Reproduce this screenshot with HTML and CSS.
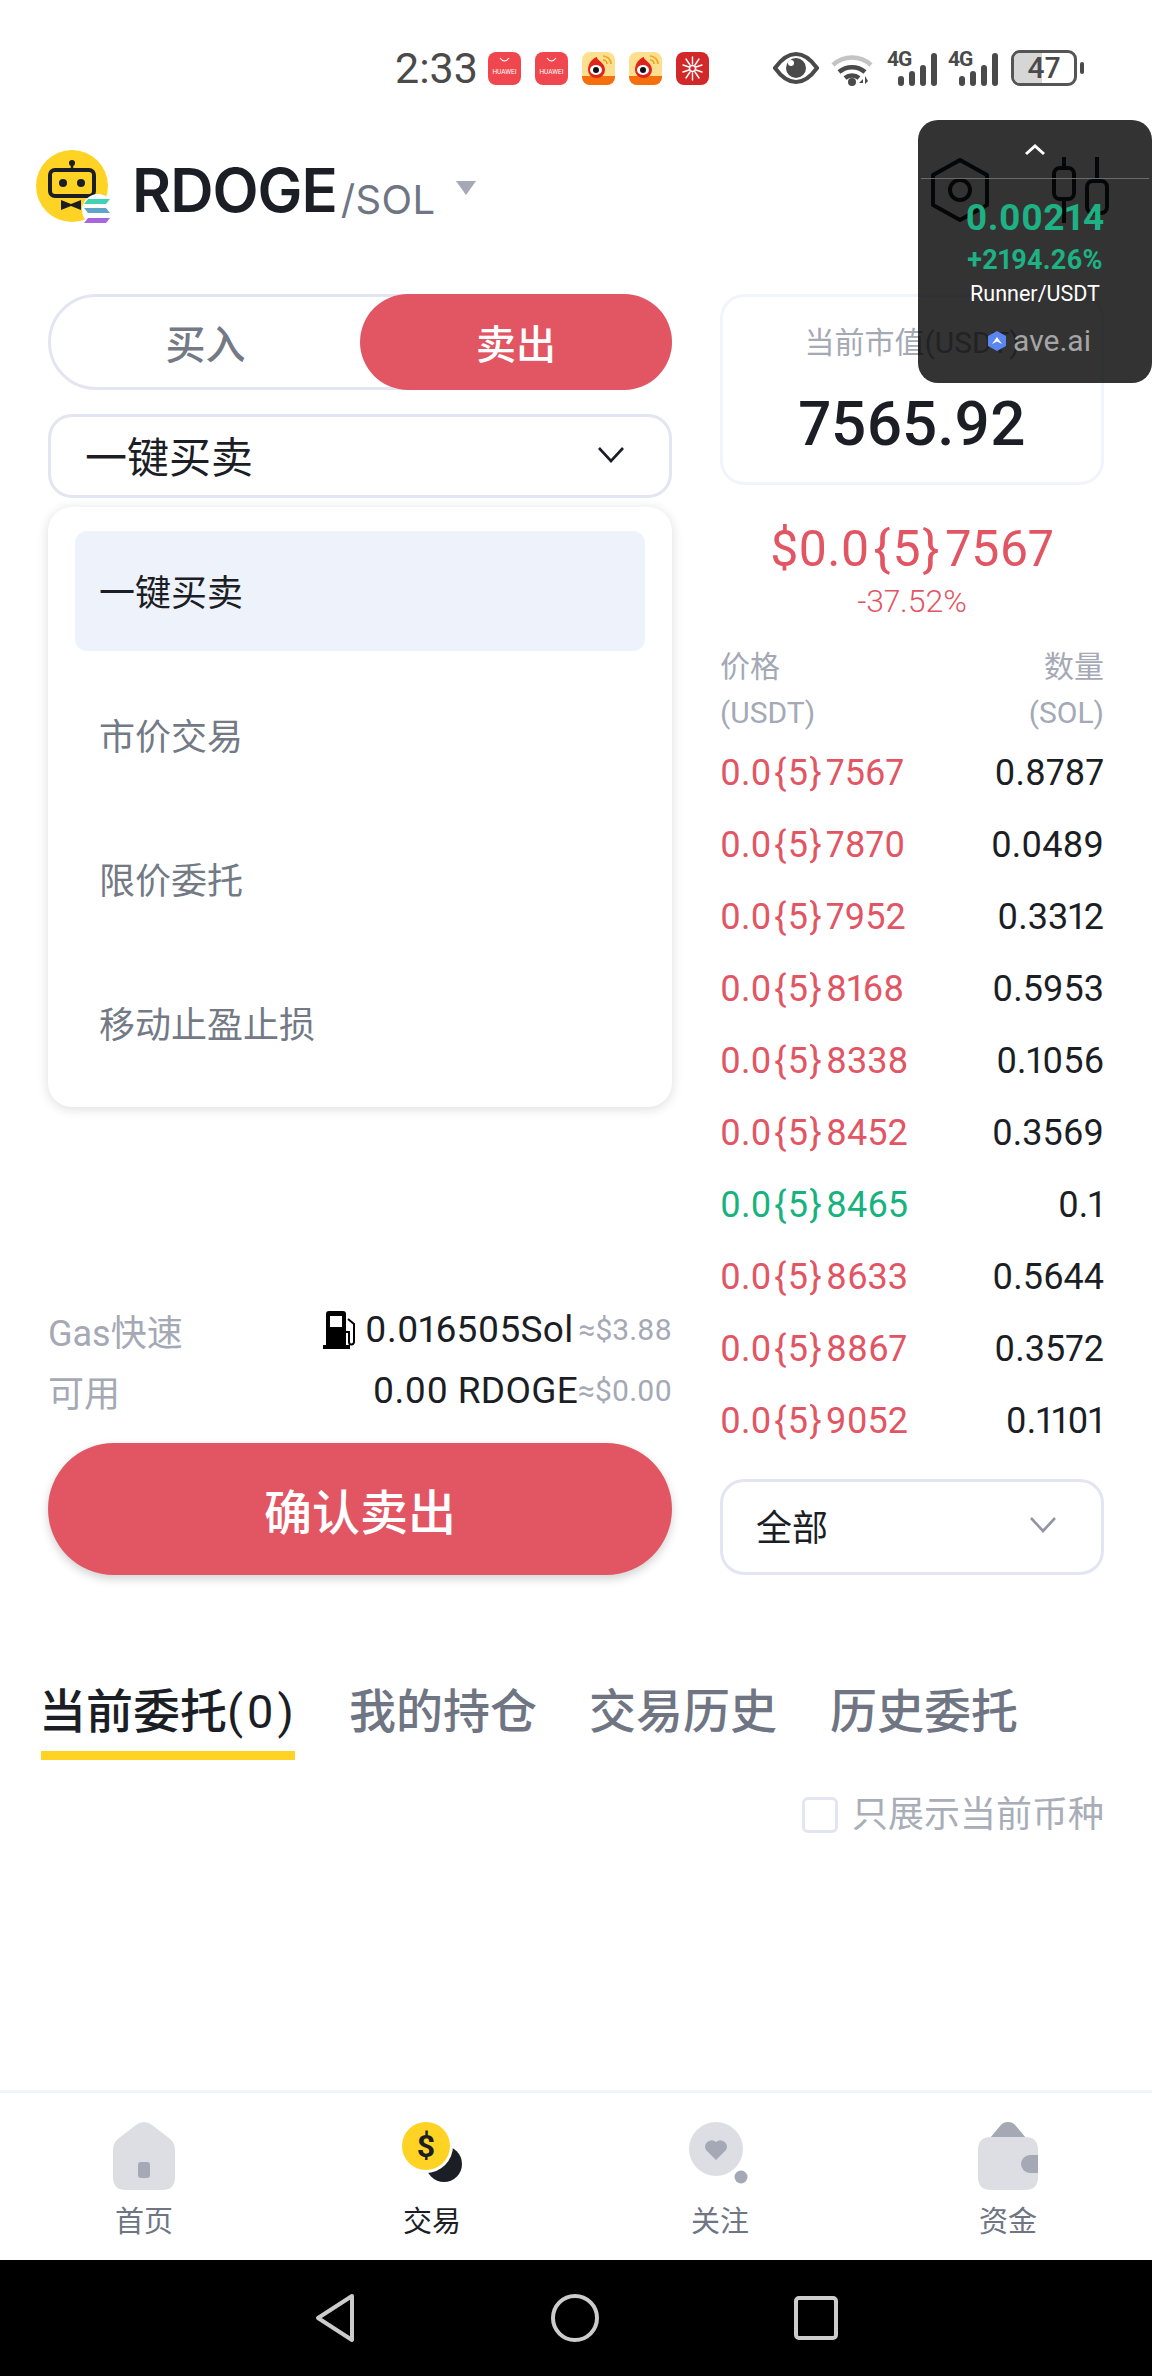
FILE: index.html
```html
<!DOCTYPE html>
<html lang="zh">
<head>
    <meta charset="utf-8">
    <link rel="stylesheet" href="styles.css">
    <title>RDOGE/SOL</title>
</head>
<body>
<div class="phone">
    <div class="status-bar">
        <span class="status-time">2:33</span>
        <div class="status-apps">
            <svg class="app-icon" viewBox="0 0 33 33"><rect width="33" height="33" rx="8" fill="#f0474f"/><path d="M12 6q4.500 6 9 0" fill="none" stroke="#fff" stroke-width="1.200"/><text x="16.500" y="22" class="app-label">HUAWEI</text></svg>
            <svg class="app-icon" viewBox="0 0 33 33"><rect width="33" height="33" rx="8" fill="#f0474f"/><path d="M12 6q4.500 6 9 0" fill="none" stroke="#fff" stroke-width="1.200"/><text x="16.500" y="22" class="app-label">HUAWEI</text></svg>
            <svg class="app-icon" viewBox="0 0 33 33"><rect width="33" height="33" rx="8" fill="#fde08f"/><path d="M0 24h33v1a8 8 0 0 1-8 8H8a8 8 0 0 1-8-8z" fill="#f4700f"/><path d="M6 18c0-7 5-12 9-13-1 3 8 5 8 13a8.500 8 0 0 1-17 0z" fill="#e0241c"/><ellipse cx="14" cy="18" rx="6" ry="5" fill="#fff"/><circle cx="14" cy="18" r="3" fill="#111"/><path d="M21 4a8 8 0 0 1 8 8M21 8a4 4 0 0 1 4 4" fill="none" stroke="#f1a21e" stroke-width="1.600"/></svg>
            <svg class="app-icon" viewBox="0 0 33 33"><rect width="33" height="33" rx="8" fill="#fde08f"/><path d="M0 24h33v1a8 8 0 0 1-8 8H8a8 8 0 0 1-8-8z" fill="#f4700f"/><path d="M6 18c0-7 5-12 9-13-1 3 8 5 8 13a8.500 8 0 0 1-17 0z" fill="#e0241c"/><ellipse cx="14" cy="18" rx="6" ry="5" fill="#fff"/><circle cx="14" cy="18" r="3" fill="#111"/><path d="M21 4a8 8 0 0 1 8 8M21 8a4 4 0 0 1 4 4" fill="none" stroke="#f1a21e" stroke-width="1.600"/></svg>
            <svg class="app-icon" viewBox="0 0 33 33"><rect width="33" height="33" rx="8" fill="#d3282a"/><g fill="none" stroke="#fff" stroke-width="1.400" stroke-linecap="round"><circle cx="16.500" cy="16.500" r="3"/><path d="M16.500 5v7M16.500 21v7M7 13l6 2M20 18l6 2M26 13l-6 2M13 18l-6 2M10 7l4 6M19 20l4 6M23 7l-4 6M14 20l-4 6"/></g></svg>
        </div>
        <div class="status-system">
            <svg class="eye-icon" viewBox="0 0 46 32"><path d="M2 16Q12 2 23 2t21 14Q34 30 23 30T2 16z" fill="none" stroke="#4a4a4a" stroke-width="4"/><circle cx="23" cy="16" r="10" fill="#4a4a4a"/><circle cx="18" cy="11" r="3" fill="#fff"/></svg>
            <svg class="wifi-icon" viewBox="0 0 46 35"><path d="M3 14a28 28 0 0 1 38 0" fill="none" stroke="#c4c4c4" stroke-width="4.500"/><path d="M9 21a20 20 0 0 1 26 0M15 27a11 11 0 0 1 14 0" fill="none" stroke="#4a4a4a" stroke-width="4.500"/><circle cx="22" cy="31" r="4" fill="#4a4a4a"/><path d="M33 28l-4 4h4zM35 25v8l3-3z" fill="#4a4a4a"/></svg>
            <div class="signal">
                <span class="signal-tag">4G</span>
                <span class="signal-bar bar-1"></span><span class="signal-bar bar-2"></span><span class="signal-bar bar-3"></span><span class="signal-bar bar-4"></span>
            </div>
            <div class="signal">
                <span class="signal-tag">4G</span>
                <span class="signal-bar bar-1"></span><span class="signal-bar bar-2"></span><span class="signal-bar bar-3"></span><span class="signal-bar bar-4"></span>
            </div>
            <div class="battery">
                <div class="battery-body"><span class="battery-fill"></span><span class="battery-level">47</span></div>
                <span class="battery-nub"></span>
            </div>
        </div>
    </div>

    <div class="float-ticker">
        <svg class="float-chevron" viewBox="0 0 22 12"><path d="M2 10l9-8 9 8" fill="none" stroke="#fff" stroke-width="3"/></svg>
        <div class="float-line"></div>
        <div class="float-price">0.00214</div>
        <div class="float-change">+2194.26%</div>
        <div class="float-pair">Runner/USDT</div>
        <div class="float-brand">
            <svg class="brand-icon" viewBox="0 0 20 20"><path d="M10 0l9 5v10l-9 5-9-5V5z" fill="#5b86f0"/><path d="M5 13l5-7 5 7-5-2.500z" fill="#fff"/></svg>
            <span>ave.ai</span>
        </div>
    </div>

    <header class="pair-header">
        <div class="pair-logo">
            <svg viewBox="0 0 78 76" width="78" height="76">
                <circle cx="36" cy="36" r="36" fill="#ffd324"/>
                <circle cx="36" cy="13" r="3" fill="#1b1e25"/>
                <path d="M36 14v7" stroke="#1b1e25" stroke-width="2.500"/>
                <rect x="14" y="20" width="44" height="26" rx="5" fill="#ffd324" stroke="#1b1e25" stroke-width="4"/>
                <circle cx="27" cy="33" r="4" fill="#1b1e25"/>
                <circle cx="45" cy="33" r="4" fill="#1b1e25"/>
                <path d="M25 50l10 4 10-4v10l-10-4-10 4z" fill="#1b1e25"/>
                <circle cx="62" cy="60" r="16" fill="#fff"/>
                <path d="M52 49h22l-4 5H48z" fill="#3fd3b5"/>
                <path d="M48 58h22l4 5H52z" fill="#5ea5c9"/>
                <path d="M52 68h22l-4 5H48z" fill="#a866dd"/>
            </svg>
        </div>
        <span class="pair-base">RDOGE</span>
        <span class="pair-quote">/SOL</span>
        <span class="pair-caret"></span>
        <div class="pair-tools">
            <svg class="tool-hex" viewBox="0 0 60 66"><path d="M30 3l27 15v30L30 63 3 48V18z" fill="none" stroke="#1b1e25" stroke-width="4" stroke-linejoin="round"/><circle cx="30" cy="33" r="10" fill="none" stroke="#1b1e25" stroke-width="4"/></svg>
            <svg class="tool-candle" viewBox="0 0 60 66"><path d="M14 0v66M47 0v24M47 56v6" fill="none" stroke="#1b1e25" stroke-width="4"/><rect x="4" y="11" width="20" height="31" rx="6" fill="#fff" stroke="#1b1e25" stroke-width="4"/><rect x="37" y="24" width="20" height="32" rx="6" fill="#fff" stroke="#1b1e25" stroke-width="4"/></svg>
        </div>
    </header>

    <main class="trade-grid">
        <section class="trade-form">
            <div class="side-toggle">
                <span class="side-option">买入</span>
                <span class="side-option side-active">卖出</span>
            </div>
            <div class="select select-order">
                <span>一键买卖</span>
                <svg class="select-arrow" viewBox="0 0 28 18"><path d="M2 2l12 13L26 2" fill="none" stroke="#1b1e25" stroke-width="2.600"/></svg>
            </div>
            <ul class="order-menu">
                <li class="menu-item menu-active">一键买卖</li>
                <li class="menu-item">市价交易</li>
                <li class="menu-item">限价委托</li>
                <li class="menu-item">移动止盈止损</li>
            </ul>
            <div class="form-bottom">
                <div class="info-row">
                    <span class="info-label">Gas快速</span>
                    <span class="info-value">
                        <svg class="pump-icon" viewBox="0 0 36 38"><path d="M3 3a3 3 0 0 1 3-3h14a3 3 0 0 1 3 3v32H3z" fill="#000"/><rect x="7" y="5" width="12" height="11" fill="#fff"/><rect y="34" width="27" height="4" fill="#000"/><path d="M25 8l6 5v18a2.500 2.500 0 0 1-5 0V21h-3" fill="none" stroke="#000" stroke-width="2"/></svg>
                        <span>0.016505Sol</span><span class="info-approx info-approx-small">≈$3.88</span>
                    </span>
                </div>
                <div class="info-row">
                    <span class="info-label">可用</span>
                    <span class="info-value"><span>0.00 RDOGE</span><span class="info-approx">≈$0.00</span></span>
                </div>
                <div class="confirm-button">确认卖出</div>
            </div>
        </section>

        <section class="book">
            <div class="cap-card">
                <div class="cap-label">当前市值(USDT)</div>
                <div class="cap-value">7565.92</div>
            </div>
            <div class="last-price">$0.0<span class="zeros">{5}</span>7567</div>
            <div class="last-change">-37.52%</div>
            <div class="book-head">
                <div>价格<br>(USDT)</div>
                <div class="book-head-right">数量<br>(SOL)</div>
            </div>
            <div class="book-row"><span class="down">0.0<span class="zeros">{5}</span>7567</span><span>0.8787</span></div>
            <div class="book-row"><span class="down">0.0<span class="zeros">{5}</span>7870</span><span>0.0489</span></div>
            <div class="book-row"><span class="down">0.0<span class="zeros">{5}</span>7952</span><span>0.3312</span></div>
            <div class="book-row"><span class="down">0.0<span class="zeros">{5}</span>8168</span><span>0.5953</span></div>
            <div class="book-row"><span class="down">0.0<span class="zeros">{5}</span>8338</span><span>0.1056</span></div>
            <div class="book-row"><span class="down">0.0<span class="zeros">{5}</span>8452</span><span>0.3569</span></div>
            <div class="book-row"><span class="up">0.0<span class="zeros">{5}</span>8465</span><span>0.1</span></div>
            <div class="book-row"><span class="down">0.0<span class="zeros">{5}</span>8633</span><span>0.5644</span></div>
            <div class="book-row"><span class="down">0.0<span class="zeros">{5}</span>8867</span><span>0.3572</span></div>
            <div class="book-row"><span class="down">0.0<span class="zeros">{5}</span>9052</span><span>0.1101</span></div>
            <div class="select select-depth">
                <span>全部</span>
                <svg class="select-arrow" viewBox="0 0 28 18"><path d="M2 2l12 13L26 2" fill="none" stroke="#8f95a3" stroke-width="2.600"/></svg>
            </div>
        </section>
    </main>

    <nav class="tabs">
        <span class="tab tab-active">当前委托<span class="tab-count">(0)</span></span>
        <span class="tab tab-hold">我的持仓</span>
        <span class="tab">交易历史</span>
        <span class="tab tab-last">历史委托</span>
    </nav>
    <div class="filter-row">
        <span class="checkbox"></span>
        <span>只展示当前币种</span>
    </div>

    <footer class="bottom-nav">
        <div class="nav-item">
            <svg class="nav-icon" viewBox="0 0 68 68"><path d="M34 0q4 0 8 3l17 13q6 5 6 11v28q0 13-13 13H16Q3 68 3 55V27q0-6 6-11L26 3q4-3 8-3z" fill="#dcdee3"/><rect x="28" y="40" width="12" height="16" rx="3" fill="#a4a9b5"/></svg>
            <span>首页</span>
        </div>
        <div class="nav-item nav-active">
            <svg class="nav-icon" viewBox="0 0 68 68"><circle cx="46" cy="42" r="18" fill="#1b1e25"/><circle cx="28" cy="24" r="27" fill="#fff"/><circle cx="28" cy="24" r="24" fill="#ffd324"/><text x="28" y="35" class="coin-mark">$</text></svg>
            <span>交易</span>
        </div>
        <div class="nav-item">
            <svg class="nav-icon" viewBox="0 0 68 68"><circle cx="30" cy="27" r="27" fill="#dcdee3"/><path d="M30 38L20 28a6.500 6.500 0 0 1 10-8 6.500 6.500 0 0 1 10 8z" fill="#a4a9b5"/><circle cx="55" cy="55" r="6.500" fill="#a4a9b5"/></svg>
            <span>关注</span>
        </div>
        <div class="nav-item">
            <svg class="nav-icon" viewBox="0 0 68 68"><path d="M34 0q5 0 8 4l10 12H16L26 4q3-4 8-4z" fill="#a4a9b5"/><path d="M17 15h34q13 0 13 13v27q0 13-13 13H17Q4 68 4 55V28q0-13 13-13z" fill="#dcdee3"/><path d="M64 33H56a9 9 0 0 0 0 18h8z" fill="#a4a9b5"/></svg>
            <span>资金</span>
        </div>
    </footer>

    <div class="system-nav">
        <svg class="sys-back" viewBox="0 0 42 50"><path d="M38 3L4 25l34 22z" fill="none" stroke="#ccc" stroke-width="4" stroke-linejoin="round"/></svg>
        <svg class="sys-home" viewBox="0 0 48 48"><circle cx="24" cy="24" r="22" fill="none" stroke="#ccc" stroke-width="4"/></svg>
        <svg class="sys-recent" viewBox="0 0 44 44"><rect x="2" y="2" width="40" height="40" rx="3" fill="none" stroke="#ccc" stroke-width="4"/></svg>
    </div>
</div>
</body>
</html>
```

FILE: styles.css
```css
* {
    box-sizing: border-box;
}

body {
    margin: 0;
    font-family: Roboto, "Noto Sans CJK SC", sans-serif;
    font-feature-settings: "pnum";
    color: #1b1e25;
    background-color: white;
}

.phone {
    position: relative;
    width: 1152px;
    height: 2376px;
    display: flex;
    flex-direction: column;
    overflow: hidden;
}

/* status bar */
.status-bar {
    height: 120px;
    padding: 50px 0 0 395px;
    display: flex;
    align-items: flex-start;
    color: #4a4a4a;
}

.status-time {
    width: 82px;
    font-size: 43px;
    line-height: 36px;
}

.status-apps {
    margin-left: 11px;
    margin-top: 2px;
    display: flex;
    gap: 14px;
}

.app-icon {
    width: 33px;
    height: 33px;
}

.app-label {
    font-size: 6.500px;
    fill: white;
    text-anchor: middle;
}

.status-system {
    margin-left: 64px;
    display: flex;
    align-items: center;
    height: 36px;
}

.eye-icon {
    width: 46px;
    height: 32px;
}

.wifi-icon {
    margin-left: 11px;
    width: 46px;
    height: 35px;
}

.signal {
    position: relative;
    margin-left: 11px;
    width: 50px;
    height: 36px;
    display: flex;
    align-items: flex-end;
    justify-content: flex-end;
    gap: 5px;
}

.signal + .signal {
    margin-left: 11px;
}

.signal-tag {
    position: absolute;
    left: 0;
    top: -1px;
    font-size: 21px;
    line-height: 20px;
    font-weight: 700;
    letter-spacing: -1px;
}

.signal-bar {
    width: 6px;
    border-radius: 3px;
    background-color: #4a4a4a;
}

.bar-1 { height: 10px; }
.bar-2 { height: 15px; }
.bar-3 { height: 21px; }
.bar-4 { height: 33px; }

.battery {
    margin-left: 13px;
    display: flex;
    align-items: center;
    gap: 3px;
}

.battery-body {
    position: relative;
    width: 66px;
    height: 36px;
    border: 3px solid #555;
    border-radius: 9px;
    overflow: hidden;
}

.battery-fill {
    position: absolute;
    left: 0;
    top: 0;
    bottom: 0;
    width: 47%;
    background-color: #d6d6d6;
}

.battery-level {
    position: relative;
    display: block;
    text-align: center;
    font-size: 30px;
    line-height: 30px;
    font-weight: 500;
}

.battery-nub {
    width: 4px;
    height: 12px;
    border-radius: 2px;
    background-color: #4a4a4a;
}

/* floating ticker, lies over the page */
.float-ticker {
    position: absolute;
    z-index: 5;
    left: 918px;
    top: 120px;
    width: 234px;
    height: 263px;
    border-radius: 20px;
    background-color: rgba(0, 0, 0, 0.8);
    text-align: center;
    color: white;
}

.float-chevron {
    display: block;
    width: 22px;
    height: 12px;
    margin: 24px auto 0;
}

.float-line {
    height: 1px;
    margin: 22px 3px 0;
    background-color: #6a6a6a;
}

.float-price {
    margin-top: 20px;
    font-size: 37px;
    line-height: 38px;
    font-weight: 700;
    letter-spacing: 0.3px;
    color: #1db184;
}

.float-change {
    margin-top: 7px;
    font-size: 27px;
    line-height: 32px;
    font-weight: 700;
    letter-spacing: 0.2px;
    color: #1db184;
}

.float-pair {
    margin-top: 2px;
    font-size: 21.500px;
    line-height: 32px;
}

.float-brand {
    margin-top: 13px;
    padding-left: 8px;
    display: flex;
    justify-content: center;
    align-items: center;
    gap: 6px;
    font-size: 30px;
    line-height: 36px;
    color: #a5a5a5;
}

.brand-icon {
    width: 20px;
    height: 20px;
}

/* pair header */
.pair-header {
    height: 174px;
    padding: 30px 42px 0 36px;
    display: flex;
    align-items: flex-start;
}

.pair-logo {
    width: 78px;
    height: 76px;
}

.pair-base {
    margin-left: 18px;
    margin-top: 4px;
    font-family: Inter, sans-serif;
    font-size: 60px;
    line-height: 72px;
    font-weight: 600;
    letter-spacing: -1px;
}

.pair-quote {
    margin-left: 4px;
    margin-top: 20px;
    font-family: Inter, sans-serif;
    font-size: 40px;
    line-height: 60px;
    letter-spacing: 0.3px;
    color: #6f7583;
}

.pair-caret {
    margin-left: 21px;
    margin-top: 31px;
    width: 0;
    height: 0;
    border-left: 10px solid transparent;
    border-right: 10px solid transparent;
    border-top: 14px solid #a4a9b5;
}

.pair-tools {
    margin-left: auto;
    margin-top: 7px;
    display: flex;
    gap: 60px;
}

.tool-hex {
    width: 60px;
    height: 66px;
}

.tool-candle {
    width: 60px;
    height: 66px;
}

/* trade area */
.trade-grid {
    height: 1280px;
    padding: 0 48px;
    display: grid;
    grid-template-columns: 624px 384px;
    column-gap: 48px;
}

.trade-form {
    position: relative;
    display: flex;
    flex-direction: column;
}

.side-toggle {
    height: 96px;
    border: 3px solid #e3e6f2;
    border-radius: 48px;
    display: flex;
}

.side-option {
    width: 315px;
    margin: -3px;
    border-radius: 48px;
    display: flex;
    align-items: center;
    justify-content: center;
    font-size: 40px;
    font-weight: 500;
    color: #737a85;
}

.side-active {
    width: 312px;
    margin-left: auto;
    color: white;
    background-color: #e25563;
}

.select {
    border: 3px solid #e3e6f2;
    border-radius: 24px;
    display: flex;
    align-items: center;
    justify-content: space-between;
}

.select-order {
    height: 84px;
    margin-top: 24px;
    padding: 0 44px 3px 34px;
    font-size: 42px;
}

.select-depth {
    height: 96px;
    margin-top: 22px;
    padding: 0 44px 4px 33px;
    font-size: 36px;
}

.select-arrow {
    width: 28px;
    height: 18px;
}

.order-menu {
    position: absolute;
    z-index: 2;
    left: 0;
    right: 0;
    top: 213px;
    height: 600px;
    margin: 0;
    padding: 24px 27px;
    list-style-type: none;
    background-color: white;
    border-radius: 24px;
    box-shadow: 0 2px 12px rgba(0, 0, 0, 0.14);
}

.menu-item {
    height: 120px;
    margin-bottom: 24px;
    padding: 0 0 3px 24px;
    display: flex;
    align-items: center;
    font-size: 36px;
    color: #737a85;
    border-radius: 12px;
}

.menu-active {
    color: #1b1e25;
    background-color: #eef2fa;
}

.form-bottom {
    margin-top: auto;
}

.info-row {
    height: 61px;
    display: flex;
    align-items: center;
    justify-content: space-between;
    font-size: 37px;
    letter-spacing: 0.3px;
}

.info-label {
    font-size: 36px;
    letter-spacing: 0;
    color: #a4a9b5;
}

.info-value {
    display: flex;
    align-items: center;
}

.pump-icon {
    width: 36px;
    height: 38px;
    margin-right: 6px;
}

.info-approx {
    font-size: 30px;
    letter-spacing: 0;
    color: #a4a9b5;
}

.info-approx-small {
    margin-left: 5px;
}

.confirm-button {
    height: 132px;
    margin-top: 22px;
    border-radius: 66px;
    display: flex;
    align-items: center;
    justify-content: center;
    font-size: 48px;
    font-weight: 500;
    color: white;
    background-color: #e25563;
    box-shadow: 0 4px 10px rgba(0, 0, 0, 0.18);
}

/* right column */
.book {
    display: flex;
    flex-direction: column;
}

.cap-card {
    height: 191px;
    border: 3px solid #f1f4fa;
    border-radius: 24px;
    text-align: center;
}

.cap-label {
    margin-top: 26px;
    font-size: 30px;
    line-height: 40px;
    color: #a4a9b5;
}

.cap-value {
    margin-top: 25px;
    font-size: 62px;
    line-height: 72px;
    font-weight: 500;
}

.last-price {
    margin-top: 34px;
    text-align: center;
    font-size: 50px;
    line-height: 60px;
    color: #e25563;
}

.zeros {
    margin: 0 0.08em;
    letter-spacing: 0.04em;
}

.last-change {
    margin-top: 5px;
    text-align: center;
    font-size: 32px;
    line-height: 34px;
    font-weight: 300;
    color: #e25563;
}

.book-head {
    height: 119px;
    padding-top: 26px;
    display: flex;
    justify-content: space-between;
    font-size: 30px;
    line-height: 46px;
    color: #a4a9b5;
}

.book-head-right {
    text-align: right;
}

.book-row {
    height: 72px;
    display: flex;
    align-items: center;
    justify-content: space-between;
    font-size: 36px;
}

.down {
    color: #e25563;
}

.up {
    color: #17b27e;
}

/* order tabs */
.tabs {
    margin-top: 108px;
    padding-left: 41px;
    height: 78px;
    display: flex;
    gap: 52px;
}

.tab {
    height: 78px;
    font-size: 47px;
    line-height: 60px;
    font-weight: 500;
    white-space: nowrap;
    color: #6f7583;
}

.tab-active {
    width: 254px;
    text-indent: -2px;
    color: #1b1e25;
    border-bottom: 9px solid #ffd324;
}

.tab-count {
    font-weight: 400;
    letter-spacing: 3.500px;
}

.tab-hold {
    margin-left: 2px;
}

.tab-last {
    margin-left: 1px;
}

.filter-row {
    margin-top: 35px;
    padding-right: 48px;
    display: flex;
    justify-content: flex-end;
    align-items: center;
    gap: 14px;
    font-size: 36px;
    line-height: 40px;
    color: #a9adb8;
}

.checkbox {
    width: 36px;
    height: 36px;
    border: 3px solid #e3e6f2;
    border-radius: 6px;
}

/* bottom navigation */
.bottom-nav {
    margin-top: auto;
    height: 170px;
    border-top: 3px solid #f1f4fa;
    display: grid;
    grid-template-columns: repeat(4, 288px);
}

.nav-item {
    padding-top: 29px;
    display: flex;
    flex-direction: column;
    align-items: center;
    font-size: 29px;
    line-height: 40px;
    color: #6f7583;
}

.nav-active {
    color: #1b1e25;
}

.nav-icon {
    width: 68px;
    height: 68px;
    margin-bottom: 12px;
}

.coin-mark {
    font-size: 32px;
    font-weight: 700;
    text-anchor: middle;
    fill: #1b1e25;
}

.system-nav {
    height: 116px;
    background-color: black;
    display: flex;
    align-items: center;
    justify-content: center;
    gap: 195px;
}

.sys-back {
    width: 42px;
    height: 50px;
}

.sys-home {
    width: 48px;
    height: 48px;
}

.sys-recent {
    width: 44px;
    height: 44px;
}
```
